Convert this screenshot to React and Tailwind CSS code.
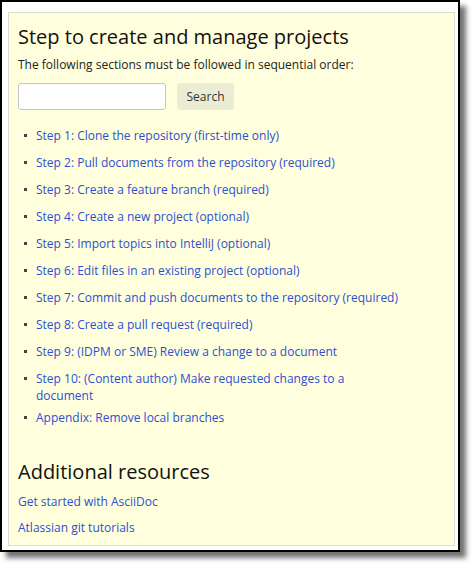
import React from 'react';

const STEPS = [
  'Step 1: Clone the repository (first-time only)',
  'Step 2: Pull documents from the repository (required)',
  'Step 3: Create a feature branch (required)',
  'Step 4: Create a new project (optional)',
  'Step 5: Import topics into IntelliJ (optional)',
  'Step 6: Edit files in an existing project (optional)',
  'Step 7: Commit and push documents to the repository (required)',
  'Step 8: Create a pull request (required)',
  'Step 9: (IDPM or SME) Review a change to a document',
  'Step 10: (Content author) Make requested changes to a document',
  'Appendix: Remove local branches',
];

export default function App() {
  return (
    <div className="w-[475px] h-[567px] bg-white font-['Open_Sans',sans-serif]">
      <div className="w-[460px] h-[552px] border-2 border-black bg-white pl-[6px] pt-[10px] pr-[3px] pb-[4px] shadow-[6px_6px_5px_rgba(0,0,0,0.55)]">
        <div className="h-full border border-[#dcdcd0] bg-[#ffffde] pl-[9px] pr-3">
          <h1 className="mt-[10px] text-[20px] leading-[28px] text-[#111]">
            Step to create and manage projects
          </h1>
          <p className="mt-[5px] text-[12px] leading-[18px] text-[#222]">
            The following sections must be followed in sequential order:
          </p>
          <div className="mt-[9px] flex items-center gap-[11px]">
            <input
              type="text"
              className="h-[27px] w-[148px] rounded-[3px] border border-[#c4c4c4] bg-white px-2 text-[12px] outline-none"
            />
            <button className="h-[27px] w-[57px] rounded-[3px] bg-[#ececd4] text-[12px] text-[#333]">
              Search
            </button>
          </div>
          <ul className="mt-[17px] pl-[6px]">
            {STEPS.map((s, i) => (
              <li
                key={s}
                className={`flex gap-[9px] text-[12px] leading-[17px] ${i === 9 ? 'mb-[5px]' : 'mb-[10px]'}`}
              >
                <span className="mt-[7px] h-[3px] w-[3px] shrink-0 bg-[#444]" />
                <a href="#" className="w-[362px] text-[#2c50cf]">{s}</a>
              </li>
            ))}
          </ul>
          <h2 className="mt-[32px] text-[20px] leading-[28px] text-[#111]">
            Additional resources
          </h2>
          <div className="mt-[7px] flex flex-col gap-[9px] text-[12px] leading-[17px]">
            <a href="#" className="text-[#2c50cf]">Get started with AsciiDoc</a>
            <a href="#" className="text-[#2c50cf]">Atlassian git tutorials</a>
          </div>
        </div>
      </div>
    </div>
  );
}
